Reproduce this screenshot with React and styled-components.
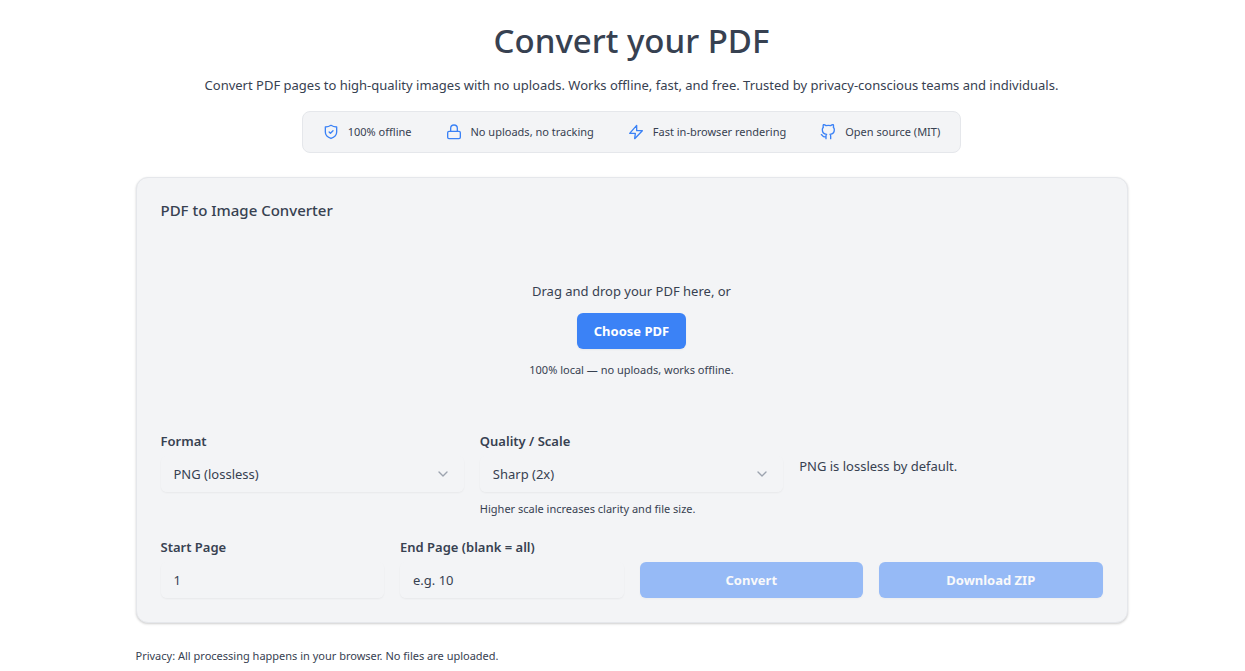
import React, { useState } from 'react';
import styled, { createGlobalStyle } from 'styled-components';
import { ChevronDown } from 'lucide-react';

const colors = {
    text: '#374151',
    muted: '#9ca3af',
    surface: '#f3f4f6',
    border: '#e5e7eb',
    primary: '#3b82f6',
    white: '#fff'
};

const ShieldIcon = () => (
    <Icon viewBox="0 0 24 24" aria-hidden="true">
        <path d="M12 2c2.500 1.800 5 2.500 8.500 2.500V12c0 5-3.500 8-8.500 9.700C7 20 3.500 17 3.500 12V4.500C7 4.500 9.500 3.800 12 2z" />
        <path d="m9.200 12 2 2 3.800-3.800" />
    </Icon>
);

const LockIcon = () => (
    <Icon viewBox="0 0 24 24" aria-hidden="true">
        <rect x="2.500" y="11" width="19" height="11" rx="2" />
        <path d="M7 11V6.500a5 5 0 0 1 10 0V11" />
    </Icon>
);

const BoltIcon = () => (
    <Icon viewBox="0 0 24 24" aria-hidden="true">
        <path d="M13 2 2.500 14H11l-1 8 11.500-12H13z" />
    </Icon>
);

const GithubIcon = () => (
    <Icon viewBox="0 0 24 24" aria-hidden="true">
        <path d="M9 19c-5 1.500-5-2.500-7-3m14 6v-3.870a3.370 3.370 0 0 0-.94-2.610c3.140-.350 6.440-1.540 6.440-7A5.440 5.440 0 0 0 20 4.770 5.070 5.070 0 0 0 19.910 1S18.730.650 16 2.480a13.380 13.380 0 0 0-7 0C6.270.650 5.090 1 5.090 1A5.070 5.070 0 0 0 5 4.770a5.440 5.440 0 0 0-1.500 3.780c0 5.420 3.300 6.610 6.440 7A3.370 3.370 0 0 0 9 18.130V22" />
    </Icon>
);

const features = [
    { icon: ShieldIcon, label: '100% offline' },
    { icon: LockIcon, label: 'No uploads, no tracking' },
    { icon: BoltIcon, label: 'Fast in-browser rendering' },
    { icon: GithubIcon, label: 'Open source (MIT)' }
];

const Select = ({ id, label, options, help }) => (
    <Field>
        <Label htmlFor={id}>{label}</Label>
        <SelectBox>
            <NativeSelect id={id}>
                {options.map(option => <option key={option}>{option}</option>)}
            </NativeSelect>
            <ChevronDown size={16} strokeWidth={2} color={colors.muted} />
        </SelectBox>
        {help && <Help>{help}</Help>}
    </Field>
);

export default function App() {
    const [start, setStart] = useState('1');
    const [end, setEnd] = useState('');

    return (
        <Page>
            <GlobalStyle />
            <Header>
                <Heading>Convert your PDF</Heading>
                <Lead>Convert PDF pages to high-quality images with no uploads. Works offline, fast, and free. Trusted by privacy-conscious teams and individuals.</Lead>
                <Features>
                    {features.map(({ icon: FeatureIcon, label }) => (
                        <Feature key={label}>
                            <FeatureIcon />
                            {label}
                        </Feature>
                    ))}
                </Features>
            </Header>
            <Card>
                <CardTitle>PDF to Image Converter</CardTitle>
                <DropZone>
                    <p>Drag and drop your PDF here, or</p>
                    <Button type="button">Choose PDF</Button>
                    <Help>100% local — no uploads, works offline.</Help>
                </DropZone>
                <Options $columns={3}>
                    <Select id="format" label="Format" options={['PNG (lossless)', 'JPEG', 'WebP']} />
                    <Select
                        id="scale"
                        label="Quality / Scale"
                        options={['Sharp (2x)', 'Standard (1x)', 'Ultra (3x)']}
                        help="Higher scale increases clarity and file size."
                    />
                    <Note>PNG is lossless by default.</Note>
                </Options>
                <Options $columns={4}>
                    <Field>
                        <Label htmlFor="start">Start Page</Label>
                        <Input id="start" value={start} onChange={(e) => setStart(e.target.value)} />
                    </Field>
                    <Field>
                        <Label htmlFor="end">End Page (blank = all)</Label>
                        <Input id="end" placeholder="e.g. 10" value={end} onChange={(e) => setEnd(e.target.value)} />
                    </Field>
                    <Button type="button" disabled>Convert</Button>
                    <Button type="button" disabled>Download ZIP</Button>
                </Options>
            </Card>
            <Help as="footer">Privacy: All processing happens in your browser. No files are uploaded.</Help>
        </Page>
    );
}

const GlobalStyle = createGlobalStyle`
    *, *:before, *:after {
        box-sizing: border-box;
    }
    body {
        margin: 0;
        background-color: ${colors.white};
        color: ${colors.text};
        font-family: "Noto Sans", sans-serif;
        font-size: 13px;
        line-height: 20px;
    }
    h1, h2, p, ul {
        margin: 0;
        padding: 0;
    }
    button, input, select {
        font: inherit;
        color: inherit;
    }
`;
const Page = styled.main`
    max-width: 1010px;
    margin: 0 auto;
    padding: 21px 0 4px 18px;
`;
const Header = styled.header`
    display: flex;
    flex-direction: column;
    align-items: center;
    margin-bottom: 24px;
    text-align: center;
`;
const Heading = styled.h1`
    font-size: 33px;
    line-height: 40px;
    font-weight: 500;
`;
const Lead = styled.p`
    margin: 13px 0 15px;
    line-height: 22px;
`;
const Features = styled.ul`
    display: flex;
    flex-wrap: wrap;
    justify-content: center;
    gap: 8px 34px;
    padding: 12px 20px;
    border: 1px solid ${colors.border};
    border-radius: 8px;
    background-color: ${colors.surface};
    font-size: 11px;
    line-height: 16px;
    list-style: none;
`;
const Feature = styled.li`
    display: flex;
    align-items: center;
    gap: 9px;
`;
const Icon = styled.svg`
    width: 16px;
    height: 16px;
    fill: none;
    stroke: ${colors.primary};
    stroke-width: 2;
    stroke-linecap: round;
    stroke-linejoin: round;
`;
const Card = styled.section`
    margin-bottom: 24px;
    padding: 24px;
    border: 1px solid ${colors.border};
    border-radius: 12px;
    background-color: ${colors.surface};
    box-shadow: 0 1px 3px rgba(0, 0, 0, 0.1), 0 1px 2px rgba(0, 0, 0, 0.1);
`;
const CardTitle = styled.h2`
    margin-bottom: 22px;
    font-size: 15px;
    line-height: 16px;
    font-weight: 500;
`;
const DropZone = styled.div`
    display: flex;
    flex-direction: column;
    align-items: center;
    gap: 12px;
    padding: 40px 24px;
    border: 1px solid transparent;
    border-radius: 8px;
`;
const Button = styled.button`
    height: 36px;
    padding: 0 17px;
    border: none;
    border-radius: 6px;
    background-color: ${colors.primary};
    color: ${colors.white};
    font-weight: 700;
    box-shadow: 0 1px 2px rgba(0, 0, 0, 0.05);
    &:disabled {
        opacity: 0.5;
    }
`;
const Options = styled.div`
    display: grid;
    grid-template-columns: repeat(${props => props.$columns}, minmax(0, 1fr));
    gap: 16px;
    margin-top: 14px;
    & + & {
        margin-top: 22px;
    }
    ${Button} {
        align-self: end;
    }
`;
const Field = styled.div`
    display: flex;
    flex-direction: column;
    gap: 8px;
`;
const Label = styled.label`
    line-height: 14px;
    font-weight: 600;
`;
const Input = styled.input`
    width: 100%;
    height: 36px;
    padding: 0 12px;
    border: 1px solid ${colors.surface};
    border-radius: 6px;
    background-color: transparent;
    box-shadow: 0 1px 2px rgba(0, 0, 0, 0.05);
    &::placeholder {
        color: ${colors.text};
        opacity: 1;
    }
`;
const SelectBox = styled.div`
    display: grid;
    align-items: center;
    > * {
        grid-area: 1 / 1;
    }
    > svg {
        justify-self: end;
        margin-right: 13px;
        pointer-events: none;
    }
`;
const NativeSelect = styled(Input).attrs({ as: 'select' })`
    appearance: none;
`;
const Help = styled.p`
    font-size: 11px;
    line-height: 18px;
`;
const Note = styled.p`
    margin-top: 22px;
`;
